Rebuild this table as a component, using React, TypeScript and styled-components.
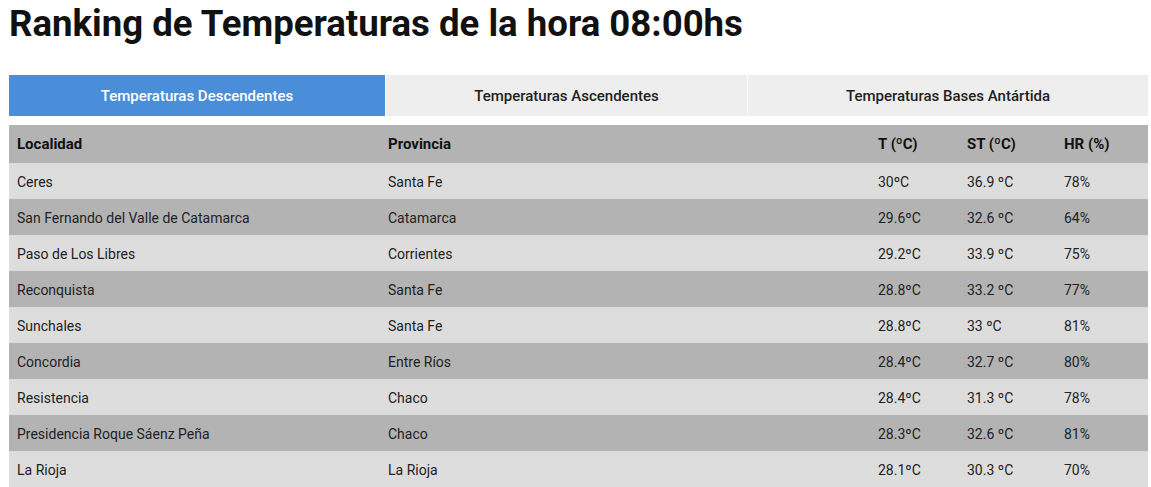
import React, { FC } from "react";
import styled, { createGlobalStyle } from "styled-components";

const GlobalStyle = createGlobalStyle`
  html, body {
    margin: 0;
    padding: 0;
    background: #ffffff;
    font-family: Roboto, "Liberation Sans", Arial, sans-serif;
    color: #222222;
  }
`;

const Page = styled.div`
  width: 1139px;
  margin-left: 9px;
`;

const Title = styled.h1`
  margin: 0;
  padding-top: 2px;
  height: 73px;
  font-size: 36.6px;
  font-weight: 700;
  line-height: 44px;
  color: #111111;
`;

const Tabs = styled.div`
  display: grid;
  grid-template-columns: 376px 361px 1fr;
  gap: 1px;
  height: 41px;
`;

const Tab = styled.div<{ active?: boolean }>`
  display: flex;
  align-items: center;
  justify-content: center;
  font-size: 15px;
  font-weight: 500;
  background: ${(p) => (p.active ? "#4a8dd8" : "#eeeeee")};
  color: ${(p) => (p.active ? "#ffffff" : "#222222")};
  cursor: pointer;
`;

const Table = styled.table`
  width: 100%;
  margin-top: 9px;
  border-collapse: collapse;
  table-layout: fixed;
  font-size: 14px;
`;

const HeadCell = styled.th`
  text-align: left;
  font-size: 15px;
  font-weight: 700;
  height: 38px;
  padding: 0 8px;
  background: #b3b3b3;
  color: #111111;
`;

const Row = styled.tr<{ dark?: boolean }>`
  background: ${(p) => (p.dark ? "#b3b3b3" : "#dddddd")};
`;

const Cell = styled.td`
  height: 35px;
  padding: 1px 8px 0;
  color: #222222;
`;

type Item = {
  localidad: string;
  provincia: string;
  t: string;
  st: string;
  hr: string;
};

const data: Item[] = [
  { localidad: "Ceres", provincia: "Santa Fe", t: "30ºC", st: "36.9 ºC", hr: "78%" },
  { localidad: "San Fernando del Valle de Catamarca", provincia: "Catamarca", t: "29.6ºC", st: "32.6 ºC", hr: "64%" },
  { localidad: "Paso de Los Libres", provincia: "Corrientes", t: "29.2ºC", st: "33.9 ºC", hr: "75%" },
  { localidad: "Reconquista", provincia: "Santa Fe", t: "28.8ºC", st: "33.2 ºC", hr: "77%" },
  { localidad: "Sunchales", provincia: "Santa Fe", t: "28.8ºC", st: "33 ºC", hr: "81%" },
  { localidad: "Concordia", provincia: "Entre Ríos", t: "28.4ºC", st: "32.7 ºC", hr: "80%" },
  { localidad: "Resistencia", provincia: "Chaco", t: "28.4ºC", st: "31.3 ºC", hr: "78%" },
  { localidad: "Presidencia Roque Sáenz Peña", provincia: "Chaco", t: "28.3ºC", st: "32.6 ºC", hr: "81%" },
  { localidad: "La Rioja", provincia: "La Rioja", t: "28.1ºC", st: "30.3 ºC", hr: "70%" },
];

const App: FC = () => (
  <Page>
    <GlobalStyle />
    <Title>Ranking de Temperaturas de la hora 08:00hs</Title>
    <Tabs>
      <Tab active>Temperaturas Descendentes</Tab>
      <Tab>Temperaturas Ascendentes</Tab>
      <Tab>Temperaturas Bases Antártida</Tab>
    </Tabs>
    <Table>
      <colgroup>
        <col style={{ width: 371 }} />
        <col style={{ width: 490 }} />
        <col style={{ width: 89 }} />
        <col style={{ width: 97 }} />
        <col />
      </colgroup>
      <thead>
        <tr>
          <HeadCell>Localidad</HeadCell>
          <HeadCell>Provincia</HeadCell>
          <HeadCell>T (ºC)</HeadCell>
          <HeadCell>ST (ºC)</HeadCell>
          <HeadCell>HR (%)</HeadCell>
        </tr>
      </thead>
      <tbody>
        {data.map((d, i) => (
          <Row key={d.localidad} dark={i % 2 === 1}>
            <Cell>{d.localidad}</Cell>
            <Cell>{d.provincia}</Cell>
            <Cell>{d.t}</Cell>
            <Cell>{d.st}</Cell>
            <Cell>{d.hr}</Cell>
          </Row>
        ))}
      </tbody>
    </Table>
  </Page>
);

export default App;
